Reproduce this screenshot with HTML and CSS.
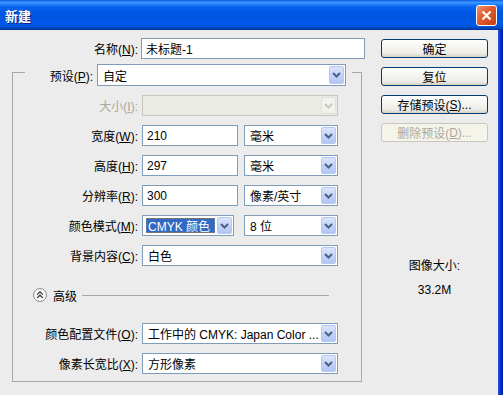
FILE: index.html
```html
<!DOCTYPE html>
<html lang="zh-CN">
<head>
    <meta charset="UTF-8">
    <title>新建</title>
    <link rel="stylesheet" href="styles.css">
</head>
<body>
  <div class="window">
    <div class="titlebar">
        <span class="title">新建</span>
        <span class="close">
            <svg width="11" height="11" viewBox="0 0 11 11"><path d="M1.5 1.5l8 8M9.5 1.5l-8 8" stroke="#fff" stroke-width="2.2" fill="none"/></svg>
        </span>
    </div>
    <div class="frame">
      <div class="dialog">
        <div class="left">
            <div class="row name-row">
                <label class="lbl">名称(<u>N</u>):</label>
                <input class="field name-field" type="text" value="未标题-1">
            </div>

            <fieldset class="group">
                <legend>
                    <div class="row preset-row">
                        <label class="lbl">预设(<u>P</u>):</label>
                        <div class="select preset-select">
                            <span class="val">自定</span>
                            <span class="drop"><svg width="9" height="6" viewBox="0 0 9 6"><path d="M1 1l3.5 3.5L8 1" fill="none" stroke="#4d6185" stroke-width="2"/></svg></span>
                        </div>
                    </div>
                </legend>

                <div class="frow">
                    <label class="lbl disabled">大小(<u>I</u>):</label>
                    <div class="select wide off">
                        <span class="val"></span>
                        <span class="drop"><svg width="9" height="6" viewBox="0 0 9 6"><path d="M1 1l3.5 3.5L8 1" fill="none" stroke="#c9c7ba" stroke-width="2"/></svg></span>
                    </div>
                </div>

                <div class="frow">
                    <label class="lbl">宽度(<u>W</u>):</label>
                    <input class="field num-field" type="text" value="210">
                    <div class="select unit-select">
                        <span class="val">毫米</span>
                        <span class="drop"><svg width="9" height="6" viewBox="0 0 9 6"><path d="M1 1l3.5 3.5L8 1" fill="none" stroke="#4d6185" stroke-width="2"/></svg></span>
                    </div>
                </div>

                <div class="frow">
                    <label class="lbl">高度(<u>H</u>):</label>
                    <input class="field num-field" type="text" value="297">
                    <div class="select unit-select">
                        <span class="val">毫米</span>
                        <span class="drop"><svg width="9" height="6" viewBox="0 0 9 6"><path d="M1 1l3.5 3.5L8 1" fill="none" stroke="#4d6185" stroke-width="2"/></svg></span>
                    </div>
                </div>

                <div class="frow">
                    <label class="lbl">分辨率(<u>R</u>):</label>
                    <input class="field num-field" type="text" value="300">
                    <div class="select unit-select">
                        <span class="val">像素/英寸</span>
                        <span class="drop"><svg width="9" height="6" viewBox="0 0 9 6"><path d="M1 1l3.5 3.5L8 1" fill="none" stroke="#4d6185" stroke-width="2"/></svg></span>
                    </div>
                </div>

                <div class="frow">
                    <label class="lbl">颜色模式(<u>M</u>):</label>
                    <div class="select mode-select focus">
                        <span class="val">CMYK 颜色</span>
                        <span class="drop"><svg width="9" height="6" viewBox="0 0 9 6"><path d="M1 1l3.5 3.5L8 1" fill="none" stroke="#4d6185" stroke-width="2"/></svg></span>
                    </div>
                    <div class="select bits-select">
                        <span class="val">8 位</span>
                        <span class="drop"><svg width="9" height="6" viewBox="0 0 9 6"><path d="M1 1l3.5 3.5L8 1" fill="none" stroke="#4d6185" stroke-width="2"/></svg></span>
                    </div>
                </div>

                <div class="frow">
                    <label class="lbl">背景内容(<u>C</u>):</label>
                    <div class="select wide">
                        <span class="val">白色</span>
                        <span class="drop"><svg width="9" height="6" viewBox="0 0 9 6"><path d="M1 1l3.5 3.5L8 1" fill="none" stroke="#4d6185" stroke-width="2"/></svg></span>
                    </div>
                </div>

                <div class="adv">
                    <svg class="adv-icon" width="14" height="14" viewBox="0 0 14 14">
                        <circle cx="7" cy="7" r="6.5" fill="#f7f7f7" stroke="#8c8c8c"/>
                        <path d="M4.2 6.6L7 3.9l2.8 2.7M4.2 9.9L7 7.2l2.8 2.7" fill="none" stroke="#333" stroke-width="1.3"/>
                    </svg>
                    <span class="adv-text">高级</span>
                    <span class="adv-line"></span>
                </div>

                <div class="frow profile-row">
                    <label class="lbl">颜色配置文件(<u>O</u>):</label>
                    <div class="select wide">
                        <span class="val">工作中的 CMYK: Japan Color ...</span>
                        <span class="drop"><svg width="9" height="6" viewBox="0 0 9 6"><path d="M1 1l3.5 3.5L8 1" fill="none" stroke="#4d6185" stroke-width="2"/></svg></span>
                    </div>
                </div>

                <div class="frow">
                    <label class="lbl">像素长宽比(<u>X</u>):</label>
                    <div class="select wide">
                        <span class="val">方形像素</span>
                        <span class="drop"><svg width="9" height="6" viewBox="0 0 9 6"><path d="M1 1l3.5 3.5L8 1" fill="none" stroke="#4d6185" stroke-width="2"/></svg></span>
                    </div>
                </div>
            </fieldset>
        </div>

        <div class="right">
            <button class="btn" type="button">确定</button>
            <button class="btn" type="button">复位</button>
            <button class="btn" type="button">存储预设(<u>S</u>)...</button>
            <button class="btn" type="button" disabled>删除预设(<u>D</u>)...</button>

            <div class="info">
                <div>图像大小:</div>
                <div class="size">33.2M</div>
            </div>
        </div>
      </div>
      <div class="edge"></div>
    </div>
  </div>
</body>
</html>
```

FILE: styles.css
```css
body {
    margin: 0;
    font-family: "Liberation Sans", "Noto Sans CJK SC", sans-serif;
    font-size: 12px;
    color: #000;
}
.window {
    width: 503px;
    height: 395px;
    display: flex;
    flex-direction: column;
    overflow: hidden;
}
.titlebar {
    height: 30px;
    flex: none;
    display: flex;
    align-items: center;
    justify-content: space-between;
    padding: 0 6px 0 5px;
    background: linear-gradient(180deg, #0a5cdc 0%, #3d95ff 8%, #2583fc 14%, #0a66f0 22%, #0058e6 40%, #0055e0 60%, #0059ea 75%, #0054db 88%, #0043b5 95%, #003096 100%);
}
.title {
    color: #fff;
    font-weight: bold;
    font-size: 13px;
    text-shadow: 1px 1px #0f1f89;
}
.close {
    width: 21px;
    height: 21px;
    box-sizing: border-box;
    border: 1px solid #fff;
    border-radius: 3px;
    background: linear-gradient(135deg, #f0916a 0%, #e05a2c 45%, #c23f17 100%);
    display: flex;
    align-items: center;
    justify-content: center;
}
.frame {
    flex: 1;
    display: flex;
}
.dialog {
    flex: 1;
    display: flex;
    background: #ececec;
    padding: 8px 0 0 12px;
}
.edge {
    width: 5px;
    background: linear-gradient(90deg, #2a58e6 0%, #0831d9 40%, #001ea0 100%);
}

/* left column */
.left {
    width: 358px;
}
.row {
    display: flex;
    align-items: center;
    height: 21px;
}
.lbl {
    text-align: right;
    white-space: nowrap;
}
.lbl.disabled {
    color: #aca899;
}
.name-row .lbl {
    width: 126px;
    margin-right: 3px;
}
.field {
    box-sizing: border-box;
    height: 21px;
    border: 1px solid #7f9db9;
    background: #fff;
    padding: 0 4px;
    margin: 0;
    font: inherit;
    color: #000;
    outline: none;
}
.name-field {
    width: 224px;
}
.num-field {
    width: 96px;
    margin-right: 6px;
}

.group {
    box-sizing: border-box;
    width: 350px;
    min-width: 0;
    margin: 0;
    padding: 0 0 7px 0;
    border: 1px solid #a8a8a8;
}
.group legend {
    margin-left: 12px;
    padding: 5px 6px 0 0;
}
.preset-row {
    height: 22px;
}
.preset-row .lbl {
    width: 68px;
    margin-right: 4px;
}

.frow {
    display: flex;
    align-items: center;
    height: 21px;
    margin-top: 9px;
}
.frow .lbl {
    width: 125px;
    margin-right: 4px;
}
.profile-row {
    margin-top: 21px;
}

/* combo boxes */
.select {
    box-sizing: border-box;
    height: 21px;
    display: flex;
    align-items: stretch;
    border: 1px solid #7f9db9;
    background: #fff;
}
.select .val {
    flex: 1;
    display: flex;
    align-items: center;
    padding-left: 5px;
    white-space: nowrap;
    overflow: hidden;
}
.select .drop {
    width: 15px;
    margin: 1px;
    box-sizing: border-box;
    border: 1px solid #b5c7f2;
    border-radius: 2px;
    background: linear-gradient(180deg, #dbe5fc 0%, #c3d3fa 50%, #b2c6f6 100%);
    display: flex;
    align-items: center;
    justify-content: center;
}
.preset-select {
    width: 249px;
    height: 22px;
}
.wide {
    width: 196px;
}
.unit-select,
.bits-select {
    width: 94px;
}
.mode-select {
    width: 92px;
    margin-right: 10px;
}
.select.off {
    border-color: #c9c7ba;
    background: #ebebe6;
}
.select.off .drop {
    border-color: #e2e1da;
    background: #f2f2ee;
}
.select.focus .val {
    margin: 2px 1px 2px 3px;
    padding-left: 2px;
    background: #316ac5;
    color: #fff;
    outline: 1px dotted #888;
    outline-offset: -1px;
}

/* advanced toggle */
.adv {
    display: flex;
    align-items: center;
    height: 14px;
    margin-top: 22px;
    padding-left: 20px;
}
.adv-text {
    margin-left: 6px;
}
.adv-line {
    flex: 1;
    height: 1px;
    background: #a8a8a8;
    margin: 0 32px 0 5px;
}

/* right column */
.right {
    width: 107px;
    margin-left: 11px;
    display: flex;
    flex-direction: column;
}
.btn {
    height: 19px;
    margin: 9px 0 0 0;
    padding: 0;
    box-sizing: border-box;
    border: 1px solid #003c74;
    border-radius: 3px;
    background: linear-gradient(180deg, #ffffff 0%, #f4f4f0 45%, #ecebe6 80%, #d6d0c5 100%);
    font: inherit;
    color: #000;
    display: flex;
    align-items: center;
    justify-content: center;
}
.btn:first-child {
    margin-top: 1px;
}
.btn:disabled {
    border-color: #c9c7ba;
    background: #f5f4ea;
    color: #aca899;
}
.info {
    margin-top: 116px;
    text-align: center;
    line-height: 16px;
}
.info .size {
    margin-top: 8px;
}
```
